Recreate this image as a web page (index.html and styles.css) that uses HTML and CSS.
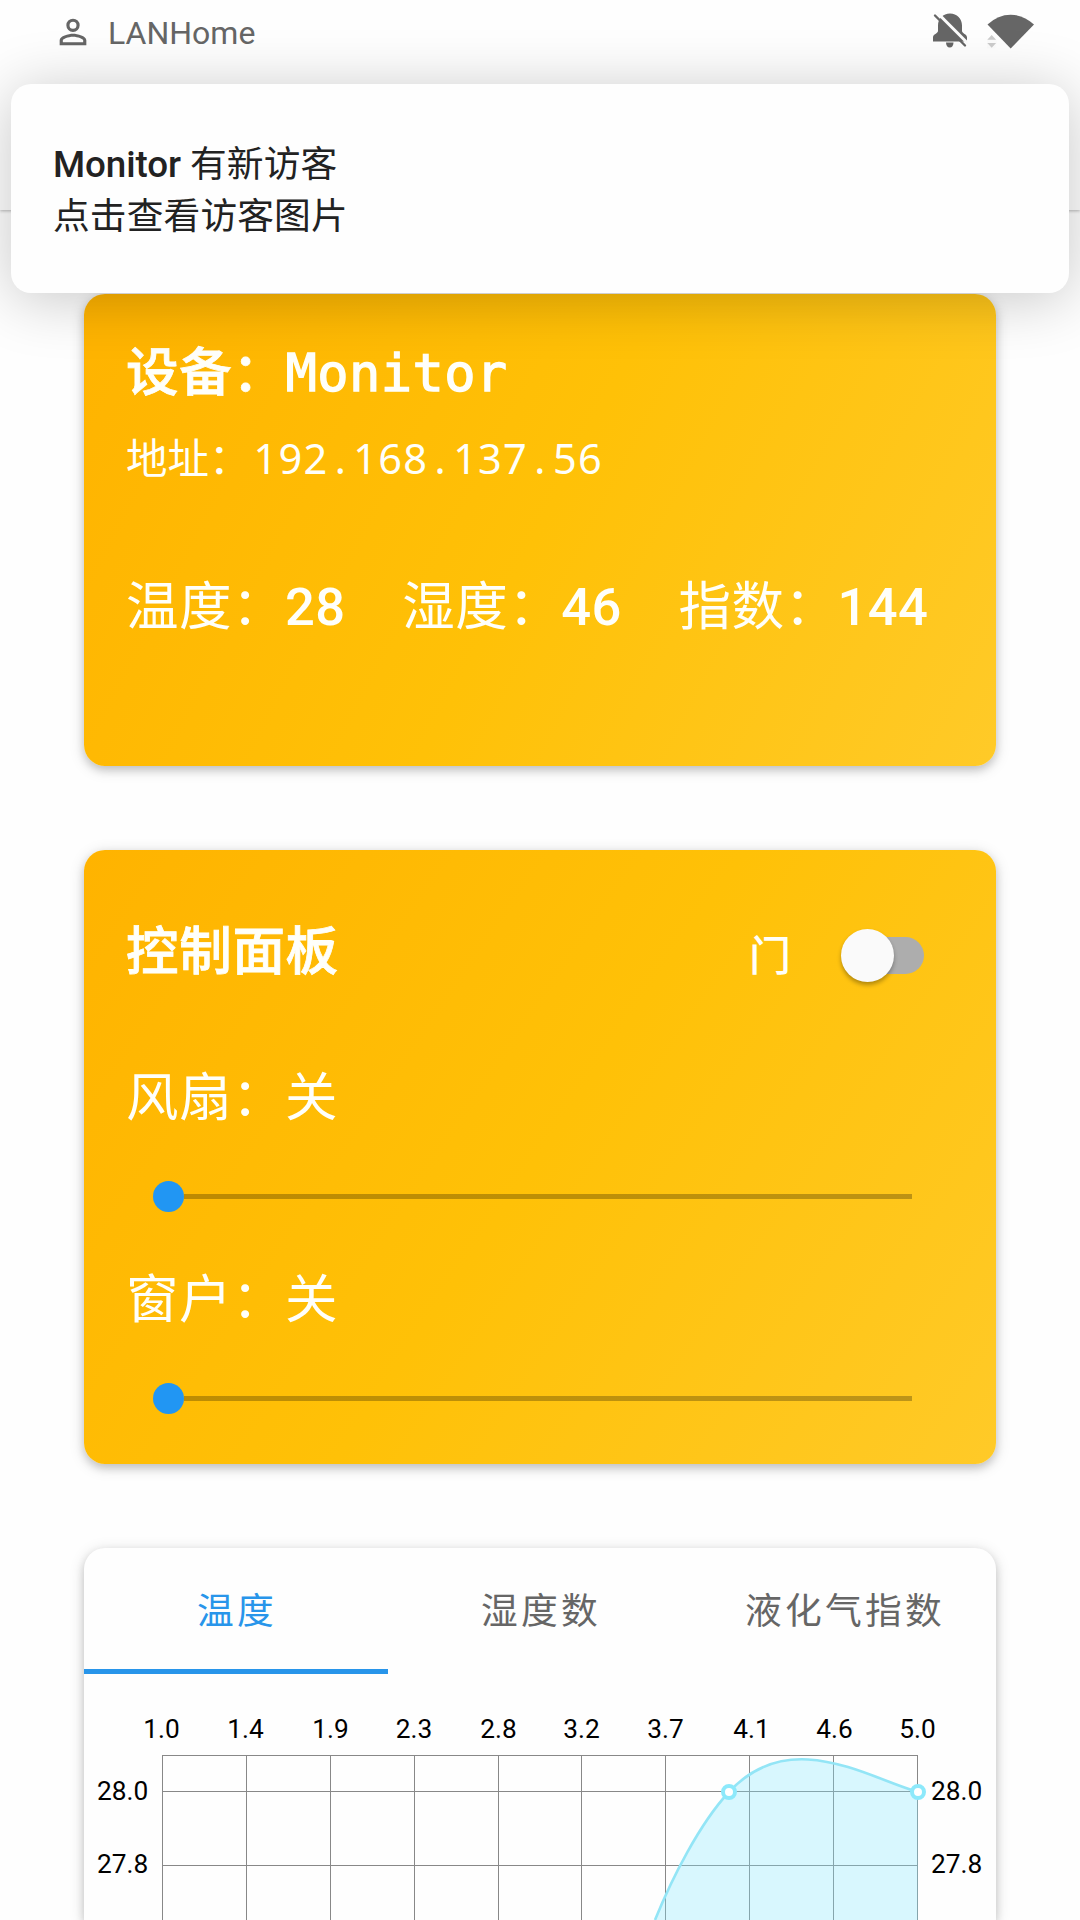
FILE: index.html
```html
<!DOCTYPE html>
<html lang="zh-CN">
<head>
<meta charset="utf-8">
<title>LANHome</title>
<link rel="stylesheet" href="styles.css">
</head>
<body>
<header class="app-bar">
  <div class="status-bar">
    <svg class="person" viewBox="0 0 24 24" width="40" height="40"><path fill="#666" d="M12 5.9a2.1 2.1 0 1 1 0 4.2 2.1 2.1 0 0 1 0-4.2m0 9c2.97 0 6.1 1.46 6.1 2.1v1.1H5.9V17c0-.64 3.13-2.1 6.1-2.1M12 4a4 4 0 1 0 0 8 4 4 0 0 0 0-8zm0 9c-2.67 0-8 1.34-8 4v3h16v-3c0-2.66-5.33-4-8-4z"/></svg>
    <span class="app-name">LANHome</span>
    <svg class="bell" viewBox="0 0 36 36" width="36" height="36">
      <path fill="#666" d="M18 1.500c7 0 12 5 12 12V19c0 2.500 5 3 5 6.500V29.500H1v-4C1 22 6 21.500 6 19v-5.500c0-7 5-12 12-12zM14 30.500h7.500c0 3-1.500 5-3.700 5s-3.800-2-3.800-5z"/>
      <path stroke="#fcfcfc" stroke-width="3" d="M4-.5 36 31.500"/>
      <path stroke="#666" stroke-width="2.400" stroke-linecap="round" d="M3 3.500 33 33.500"/>
    </svg>
    <svg class="wifi" viewBox="0 0 48 36" width="48" height="36">
      <path fill="#666" d="M.5 11.500Q11 1.700 23.700 1.700T47 11.500L23.700 35.500z"/>
      <path d="M0 26.800 4.500 21.800 10 27.500v2l-2 6H0z" fill="#fbfbfb"/>
      <path d="M.3 26.700h8.800L4.700 22zM.3 30h8.800L4.700 34.700z" fill="#ccc"/>
    </svg>
  </div>
</header>

<aside class="notification">
  <p><b>Monitor</b> 有新访客</p>
  <p>点击查看访客图片</p>
</aside>

<main class="content">
  <section class="card device">
    <h1 class="title">设备：<span class="mono">Monitor</span></h1>
    <p class="address">地址：<span class="ip">192<i>.</i>168<i>.</i>137<i>.</i>56</span></p>
    <div class="stats">
      <span>温度：<b>28</b></span>
      <span>湿度：<b>46</b></span>
      <span>指数：<b>144</b></span>
    </div>
  </section>

  <section class="card control">
    <div class="control-head">
      <h2 class="title">控制面板</h2>
      <span class="door">门</span>
      <span class="switch"><span class="knob"></span></span>
    </div>
    <p class="label">风扇：关</p>
    <div class="slider"><span class="thumb"></span><span class="track"></span></div>
    <p class="label second">窗户：关</p>
    <div class="slider"><span class="thumb"></span><span class="track"></span></div>
  </section>

  <section class="card charts">
    <nav class="tabs">
      <span class="tab active">温度</span>
      <span class="tab">湿度数</span>
      <span class="tab">液化气指数</span>
    </nav>
    <svg class="chart" viewBox="84 1674 912 246" width="912" height="246">
      <g stroke="#888" fill="none">
        <path d="M162 1755.500H918M162 1791.500H918M162 1865.500H918"/>
        <path d="M162.500 1755V1920M246.500 1755V1920M330.500 1755V1920M414.500 1755V1920M498.500 1755V1920M581.500 1755V1920M665.500 1755V1920M749.500 1755V1920M833.500 1755V1920M917.500 1755V1920"/>
      </g>
      <path fill="#80e8ff" fill-opacity=".3" d="M655 1920C672 1878 700 1823 729 1792C790 1726 868 1778 918 1792V1920z"/>
      <path fill="none" stroke="#93e5f6" stroke-width="2.600" d="M655 1920C672 1878 700 1823 729 1792C790 1726 868 1778 918 1792"/>
      <g fill="#fff" stroke="#8de9fb" stroke-width="4"><circle cx="729" cy="1792" r="6"/><circle cx="918" cy="1792" r="6"/></g>
      <g class="axis" text-anchor="middle">
        <text x="161.500" y="1738">1.0</text><text x="245.500" y="1738">1.4</text><text x="330.500" y="1738">1.9</text><text x="414" y="1738">2.3</text><text x="498.500" y="1738">2.8</text>
        <text x="581.500" y="1738">3.2</text><text x="665.500" y="1738">3.7</text><text x="751.500" y="1738">4.1</text><text x="834.500" y="1738">4.6</text><text x="917.500" y="1738">5.0</text>
      </g>
      <g class="axis">
        <text x="97" y="1800">28.0</text><text x="97" y="1873">27.8</text>
        <text x="931" y="1800">28.0</text><text x="931" y="1873">27.8</text>
      </g>
    </svg>
  </section>
</main>
</body>
</html>
```
FILE: styles.css
```css
* { box-sizing: border-box; }

body {
  margin: 0;
  width: 1080px;
  height: 1920px;
  overflow: hidden;
  position: relative;
  background: #fefefe;
  font-family: Roboto, "Noto Sans CJK SC", sans-serif;
}

h1, h2, p { margin: 0; }
svg { display: block; }

.app-bar {
  height: 210px;
  background: #fefefe;
  box-shadow: 0 1px 3px rgba(0, 0, 0, .28);
}

.status-bar {
  display: flex;
  align-items: flex-start;
  height: 84px;
  padding: 12px 45px 0 53px;
}

.app-name {
  margin: 2px auto 0 15px;
  font-size: 32px;
  line-height: 38px;
  color: #666;
}

.bell { margin-right: 19px; }
.wifi { margin-top: 1px; }

/* Heads-up notification floating over the page */
.notification {
  position: absolute;
  z-index: 2;
  left: 11px;
  top: 84px;
  width: 1058px;
  height: 209px;
  padding: 55px 42px 0;
  border-radius: 20px;
  background: #fefefe;
  box-shadow: 0 6px 60px rgba(0, 0, 0, .22);
  color: #222;
  font-size: 36.750px;
  line-height: 52px;
  letter-spacing: .1px;
}

.notification b {
  font-weight: 500;
  letter-spacing: -.1px;
}

.content {
  display: flex;
  flex-direction: column;
  gap: 84px;
  padding: 84px 84px 0;
}

.card {
  flex: none;
  border-radius: 21px;
  color: #fffffa;
  box-shadow: 0 4px 8px rgba(0, 0, 0, .16), 0 3px 16px rgba(0, 0, 0, .14);
}

.title {
  font-size: 52.500px;
  line-height: 62px;
  font-weight: 500;
  letter-spacing: .7px;
  -webkit-text-stroke: .8px currentColor;
}

.device {
  height: 472px;
  padding: 48px 42px 0;
  background: linear-gradient(117.400deg, #ffb300, #ffc107 50%, #ffca28);
}

.mono {
  font-family: "DejaVu Sans Mono", monospace;
  font-size: 52px;
  font-weight: 400;
  letter-spacing: .4px;
  -webkit-text-stroke: 1.300px currentColor;
}

.address {
  margin-top: 29px;
  height: 50px;
  font-size: 41.500px;
  line-height: 50px;
}

.ip {
  margin-left: 3px;
  font-family: "Noto Sans", sans-serif;
  letter-spacing: 1.200px;
}

.ip i {
  display: inline-block;
  width: 25px;
  font-style: normal;
  text-align: center;
}

.stats {
  display: flex;
  gap: 56.500px;
  margin-top: 93px;
  font-size: 52.500px;
  line-height: 62px;
  letter-spacing: .5px;
  white-space: nowrap;
}

.stats b { font-weight: 500; }

.control {
  height: 614px;
  padding: 71px 42px 0;
  background: linear-gradient(123.950deg, #ffb300, #ffc107 50%, #ffca28);
}

.control-head {
  display: flex;
  align-items: center;
  height: 62px;
}

.door {
  margin: 9px 54px 0 auto;
  font-size: 42px;
  line-height: 50px;
  font-weight: 500;
}

.switch {
  width: 79px;
  height: 37px;
  margin: 7px 30px 0 0;
  border-radius: 19px;
  background: #adadad;
}

.knob {
  display: block;
  width: 53px;
  height: 53px;
  margin: -8px 0 0 -4px;
  border-radius: 50%;
  background: #fafafa;
  box-shadow: 0 3px 4px rgba(0, 0, 0, .3);
}

.label {
  margin-top: 84px;
  font-size: 52.500px;
  line-height: 62px;
  letter-spacing: .5px;
}

.label.second { margin-top: 57px; }

.slider {
  display: flex;
  align-items: center;
  height: 31px;
  margin: 52px 42px 0 27px;
}

.thumb {
  width: 31px;
  height: 31px;
  border-radius: 50%;
  background: #2196f3;
}

.track {
  flex: 1;
  height: 5px;
  background: rgba(0, 0, 0, .26);
}

.charts {
  height: 372px;
  border-radius: 21px 21px 0 0;
  background: #fefefe;
}

.tabs {
  display: flex;
  height: 126px;
}

.tab {
  flex: 1;
  padding-left: 2px;
  font-size: 36.750px;
  line-height: 128px;
  letter-spacing: 3.280px;
  text-align: center;
  color: #666;
}

.tab.active {
  color: #2895ea;
  box-shadow: inset 0 -5px #2895ea;
}

.axis {
  font-size: 26.250px;
  fill: #000;
}
```
